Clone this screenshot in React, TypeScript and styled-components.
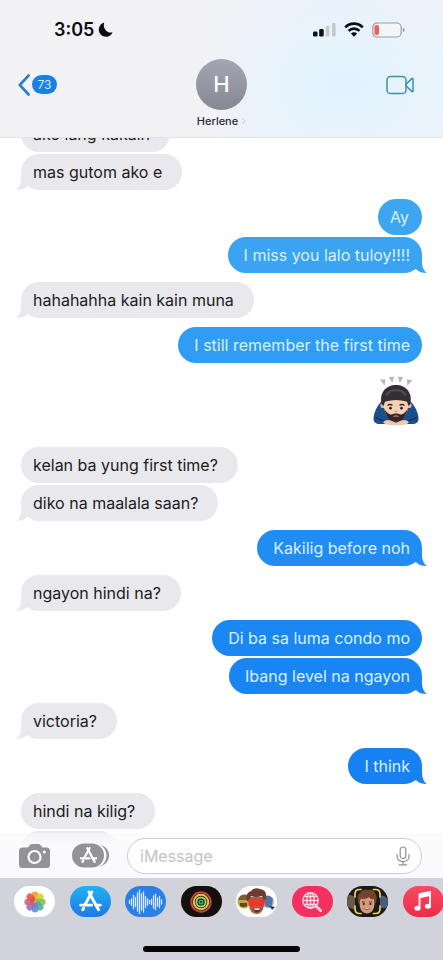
import React from "react";
import styled, { createGlobalStyle, css } from "styled-components";

const GlobalStyle = createGlobalStyle`
  *, *::before, *::after { box-sizing: border-box; }
  html, body { margin: 0; padding: 0; background: #fff; }
  body, button, input { font-family: Inter, "Liberation Sans", sans-serif; }
  button { border: 0; padding: 0; background: none; cursor: pointer; }
`;

const Phone = styled.div`
  display: flex;
  flex-direction: column;
  height: 100vh;
  overflow: hidden;
  background: #fff;
  color: #17171b;
`;

const Header = styled.header`
  flex: none;
  border-bottom: 1px solid #e2e3e6;
  background:
    radial-gradient(ellipse 150px 110px at 78% 62%, #e2f3fe 0%, #e6f3fdcc 45%, transparent 100%),
    linear-gradient(90deg, #f2f2f4 0%, #f2f2f5 45%, #eaf2fb 75%, #eef3f9 100%);
`;

const StatusBar = styled.div`
  display: flex;
  justify-content: space-between;
  align-items: center;
  height: 59px;
  padding: 0 38px 0 54px;
`;

const Clock = styled.div`
  display: flex;
  align-items: center;
  gap: 4px;
  font-size: 18px;
  line-height: 20px;
  font-weight: 600;
  color: #0c0c0e;
`;

const StatusIcons = styled.div`
  display: flex;
  align-items: center;
  gap: 8px;
`;

const NavBar = styled.nav`
  display: grid;
  grid-template-columns: 1fr auto 1fr;
  align-items: start;
  height: 78px;
  padding: 0 28px 0 18px;
`;

const BackButton = styled.button`
  display: flex;
  align-items: center;
  gap: 2px;
  justify-self: start;
  height: 51px;
`;

const UnreadCount = styled.span`
  display: block;
  width: 25px;
  border-radius: 10px;
  background: #1a80e4;
  color: #cfeaff;
  font-size: 12px;
  line-height: 19px;
  text-align: center;
`;

const Contact = styled.button`
  display: flex;
  flex-direction: column;
  align-items: center;
  gap: 4px;
  padding-left: 10px;
  color: #2b2b30;
`;

const Avatar = styled.span`
  display: block;
  width: 51px;
  height: 51px;
  border-radius: 50%;
  background: linear-gradient(#a3a6b3, #868793);
  color: #fff;
  font-size: 22px;
  font-weight: 500;
  line-height: 51px;
`;

const ContactName = styled.span`
  display: flex;
  align-items: center;
  gap: 4px;
  font-size: 11px;
  font-weight: 500;
  line-height: 14px;
`;

const VideoButton = styled.button`
  display: flex;
  align-items: center;
  justify-self: end;
  height: 51px;
`;

const Chat = styled.main`
  position: relative;
  flex: 1;
  min-height: 0;
  display: flex;
  flex-direction: column;
  overflow: hidden;
`;

const Thread = styled.div`
  flex: 1;
  min-height: 0;
  display: flex;
  flex-direction: column;
  justify-content: flex-end;
  gap: 9px;
  padding: 0 21px 11px;
`;

type Side = "in" | "out";

const Group = styled.div<{ $side: Side }>`
  flex: none;
  display: flex;
  flex-direction: column;
  align-items: ${(p) => (p.$side === "in" ? "flex-start" : "flex-end")};
  gap: 2px;
`;

const BubbleBox = styled.div<{ $side: Side; $color: string }>`
  position: relative;
  min-width: 44px;
  min-height: 36px;
  padding: ${(p) => (p.$side === "in" ? "8px 20px 8px 12px" : "8px 12px 8px 16px")};
  border-radius: 18px;
  background: ${(p) => p.$color};
  color: ${(p) => (p.$side === "in" ? "#1b1b20" : "#d9f1ff")};
  font-size: 16px;
  line-height: 20px;
  &:empty { width: 96px; }
`;

const ShortText = styled.span`
  margin-left: -4px;
`;

const Tail = styled.svg<{ $side: Side }>`
  position: absolute;
  bottom: 0;
  ${(p) =>
    p.$side === "in"
      ? css`
          left: -5px;
          transform: scaleX(-1);
        `
      : css`
          right: -5px;
        `}
`;

const Sticker = styled.div`
  display: flex;
  padding: 4px 3px 12px 0;
`;

const Composer = styled.form`
  position: absolute;
  left: 0;
  right: 0;
  bottom: 0;
  display: flex;
  align-items: center;
  gap: 21px;
  height: 45px;
  padding: 0 21px 0 19px;
  background: linear-gradient(#fafafc99, #fafafc 12px);
`;

const IconButton = styled.button`
  display: flex;
  flex: none;
`;

const Field = styled.label`
  flex: 1;
  min-width: 0;
  display: flex;
  align-items: center;
  height: 36px;
  margin-left: -3px;
  padding: 0 11px 0 12px;
  border: 1px solid #cdcdd1;
  border-radius: 18px;
  background: #fff;
`;

const TextInput = styled.input`
  flex: 1;
  min-width: 0;
  padding: 0;
  border: 0;
  outline: 0;
  background: transparent;
  color: #1b1b20;
  font-size: 16px;
  &::placeholder { color: #c3c3c7; opacity: 1; }
`;

const Drawer = styled.footer`
  flex: none;
  display: flex;
  flex-direction: column;
  justify-content: space-between;
  align-items: center;
  height: 82px;
  padding-bottom: 8px;
  background: #d2d3da;
`;

const AppStrip = styled.div`
  align-self: stretch;
  display: flex;
  justify-content: space-between;
  margin-right: -1px;
  padding: 8px 0 0 14px;
`;

const AppButton = styled.button<{ $bg: string }>`
  display: flex;
  flex: none;
  align-items: center;
  justify-content: center;
  width: 41px;
  height: 31px;
  border-radius: 16px;
  overflow: hidden;
  background: ${(p) => p.$bg};
`;

const HomeIndicator = styled.div`
  width: 157px;
  height: 6px;
  border-radius: 3px;
  background: #050505;
`;

const Moon = () => (
  <svg width="15" height="15" viewBox="0 0 15 15" aria-hidden="true">
    <path d="M6.200.6A7.200 7.200 0 1 0 14.600 10.400C10.200 11.500 4.300 7.500 6.200.6Z" fill="#0c0c0e" />
  </svg>
);

const Signal = () => (
  <svg width="23" height="15" viewBox="0 0 23 15" aria-hidden="true">
    <rect x="0" y="9.500" width="4.500" height="5" rx="1.200" fill="#111" />
    <rect x="6.200" y="7" width="4.500" height="7.500" rx="1.200" fill="#111" />
    <rect x="12.800" y="4" width="3.600" height="10.500" rx="1.200" fill="#c5c8cd" />
    <rect x="19" y="1" width="3.600" height="13.500" rx="1.200" fill="#c5c8cd" />
  </svg>
);

const Wifi = () => (
  <svg width="20" height="15" viewBox="0 0 20 15" aria-hidden="true">
    <g fill="none" stroke="#0c0c0e" strokeWidth="2.600">
      <path d="M1.200 5.400C6.200.4 13.800.4 18.800 5.400" />
      <path d="M4.500 8.900C7.600 5.900 12.400 5.900 15.500 8.900" />
    </g>
    <path d="M10 14.700L6.900 11.400C8.700 9.800 11.300 9.800 13.100 11.400Z" fill="#0c0c0e" />
  </svg>
);

const Battery = () => (
  <svg width="33" height="16" viewBox="0 0 33 16" aria-hidden="true">
    <rect x=".7" y="1" width="28.500" height="14" rx="4.500" fill="#f3f6f9" stroke="#9a9da1" strokeWidth="1.200" />
    <path d="M6 1H5.200A4.500 4.500 0 0 0 .7 5.500V10.500A4.500 4.500 0 0 0 5.200 15H6" fill="none" stroke="#dfa09b" strokeWidth="1.200" />
    <rect x="2.500" y="3" width="4.500" height="10" rx="2" fill="#e5645c" />
    <path d="M31 6V10C32.900 9.500 32.900 6.500 31 6Z" fill="#8b8e92" />
  </svg>
);

const BackChevron = () => (
  <svg width="12" height="22" viewBox="0 0 12 22" aria-hidden="true">
    <path d="M10.600 1.500L1.800 11L10.600 20.500" fill="none" stroke="#2f80c4" strokeWidth="2.600" strokeLinecap="round" strokeLinejoin="round" />
  </svg>
);

const VideoIcon = () => (
  <svg width="29" height="20" viewBox="0 0 29 20" aria-hidden="true">
    <g fill="none" stroke="#3f8fb0" strokeWidth="1.500" strokeLinejoin="round">
      <rect x="1" y="1.500" width="19" height="17" rx="3.600" />
      <path d="M20.300 9L25.800 3.600Q27 2.800 27 4.500V15.500Q27 17.200 25.800 16.400L20.300 11Z" />
    </g>
  </svg>
);

const BowingPerson = () => (
  <svg width="46" height="50" viewBox="0 0 46 50" role="img" aria-label="Person bowing">
    <g fill="#b5b5ba">
      <path d="M7 3.500L12.500 3.500L11.500 9.500Z" />
      <path d="M15.800 1L21 .8L19.300 7Z" />
      <path d="M25 .8L30.200 1L26.800 7Z" />
      <path d="M34 3.200L39.500 4.500L34.300 9.500Z" />
    </g>
    <path d="M10 24C4 29 .5 37 .5 43Q.5 47 5 48H41Q45.500 47 45.500 43C45.500 37 42 29 36 24Z" fill="#1b4f8c" />
    <path d="M2.500 41Q7 45 14 45M43.500 41Q39 45 32 45" fill="none" stroke="#0d2f5c" strokeWidth="1.300" />
    <path d="M10 46Q14 42 22 46.500H24Q32 42 36 46Q34 49.500 23.500 49.200H22.500Q12 49.500 10 46Z" fill="#f2c7ab" />
    <circle cx="10" cy="29.500" r="2.600" fill="#e8b492" />
    <circle cx="36" cy="29.500" r="2.600" fill="#e8b492" />
    <path d="M11 24Q10 36 15 41Q23 48 31 41Q36 36 35 24Z" fill="#f6d0b5" />
    <path d="M11.500 33C12.500 39 16 45.500 23 45.500C30 45.500 33.500 39 34.500 33C32 37 30 38.500 27 38.500C25 37.300 21 37.300 19 38.500C16 38.500 14 37 11.500 33Z" fill="#33262a" />
    <path d="M20.500 40.500Q23 39.300 25.500 40.500" stroke="#c9806b" strokeWidth="1.200" fill="none" />
    <path d="M9 29C5.500 17 13 9 23 9C33 9 40.500 17 37 29L35 29.500C35 27.500 34.500 26.500 33.500 25.500Q23 22.500 12.500 25.500C11.500 26.500 11 27.500 11 29.500Z" fill="#332e33" />
    <path d="M13.500 19C17.500 12.500 28.500 12.500 32.500 19" stroke="#4f494f" strokeWidth="2.400" fill="none" strokeLinecap="round" />
    <path d="M14.500 29.500Q17 27.800 19.500 29.300M26.500 29.300Q29 27.800 31.500 29.500" stroke="#3d2a26" strokeWidth="1.500" fill="none" />
    <circle cx="17.500" cy="32.200" r="1.400" fill="#362620" />
    <circle cx="28.500" cy="32.200" r="1.400" fill="#362620" />
    <path d="M21.800 35.300Q23 36.300 24.200 35.300" stroke="#c98b6e" strokeWidth="1" fill="none" />
  </svg>
);

const CameraIcon = () => (
  <svg width="32" height="26" viewBox="0 0 32 26" aria-hidden="true">
    <path d="M3.500 4.500H8Q9.200 4.500 10 3.200L11 1.800Q11.600 1 13 1H19.500Q20.700 1 21.300 1.800L22.400 3.200Q23.200 4.500 24.400 4.500H27.500Q31 4.500 31 8V21.500Q31 25 27.500 25H3.500Q0 25 0 21.500V8Q0 4.500 3.500 4.500Z" fill="#929297" />
    <circle cx="15.500" cy="14" r="6" fill="none" stroke="#fff" strokeWidth="2.200" />
    <circle cx="25.300" cy="9" r="1.500" fill="#fff" />
  </svg>
);

const AppStoreMark = () => (
  <g fill="none" stroke="#fff" strokeLinecap="round" strokeWidth="2.600">
    <path d="M10.600 2.600L17.400 15.200L19.200 18.400" />
    <path d="M13.200 2.600L7.200 13.600" />
    <path d="M3.200 14.200H13M17 14.200H20.800" />
    <path d="M5.900 17L5.100 18.400" />
  </g>
);

const AppsIcon = () => (
  <svg width="37" height="25" viewBox="0 0 37 25" aria-hidden="true">
    <path d="M25 1C33 2 37 7 37 12.500S33 23 25 24Z" fill="#929297" />
    <rect x="0" y="0" width="34.500" height="25" rx="12.500" fill="#fafafc" />
    <rect x="0" y=".5" width="32" height="24" rx="12" fill="#929297" />
    <svg x="6" y="3" width="21" height="19" viewBox="0 0 24 22"><AppStoreMark /></svg>
  </svg>
);

const MicIcon = () => (
  <svg width="14" height="20" viewBox="0 0 14 20" aria-hidden="true">
    <g fill="none" stroke="#8f8f95" strokeWidth="1.200" strokeLinecap="round">
      <rect x="4.200" y="1" width="5.600" height="11.500" rx="2.800" />
      <path d="M1 8.500V10.500C1 17.300 13 17.300 13 10.500V8.500M7 15.700V18.800M3.200 18.800H10.800" />
    </g>
  </svg>
);

const petals = ["#f49a2c", "#d3cf35", "#86c04b", "#4fb08e", "#5b8fd0", "#8e70bd", "#cf6387", "#e4523f"];

const PhotosIcon = () => (
  <svg width="24" height="24" viewBox="-12 -12 24 24" aria-hidden="true">
    {petals.map((color, i) => (
      <rect key={color} x="-3.300" y="-10.600" width="6.600" height="10" rx="3.300" fill={color} opacity=".9" transform={`rotate(${i * 45})`} />
    ))}
  </svg>
);

const StoreIcon = () => (
  <svg width="27" height="25" viewBox="0 0 24 22" aria-hidden="true"><AppStoreMark /></svg>
);

const levels = [3, 6, 13, 9, 18, 23, 16, 20, 11, 6, 3, 5, 12, 15, 8, 11, 4];

const WaveIcon = () => (
  <svg width="37" height="26" viewBox="0 0 37 26" aria-hidden="true">
    {levels.map((h, i) => (
      <path key={i} d={`M${2.500 + i * 2} ${13 - h / 2}V${13 + h / 2}`} stroke="#d5f0ff" strokeWidth="1.300" strokeLinecap="round" />
    ))}
  </svg>
);

const RingsIcon = () => (
  <svg width="24" height="24" viewBox="-12 -12 24 24" aria-hidden="true">
    <g fill="none" strokeWidth="2">
      <circle r="9.700" stroke="#c5463f" />
      <circle r="7.200" stroke="#e0c84f" />
      <circle r="4.600" stroke="#9fd35c" />
    </g>
    <circle r="2.600" fill="#3cae7c" />
    <circle r="1" fill="#12302a" />
  </svg>
);

const MemojiIcon = () => (
  <svg width="41" height="31" viewBox="0 0 41 31" aria-hidden="true">
    <circle cx="8" cy="16" r="6.500" fill="#c9a23a" />
    <path d="M2 14Q4 7 12 9L11 14Z" fill="#75612f" />
    <path d="M4 17H11V20Q7 22 4 20Z" fill="#5d4b2f" />
    <circle cx="32" cy="16" r="6" fill="#9bb4d3" />
    <path d="M28 11Q33 7 37 13L35 22L29 20Z" fill="#56749d" />
    <path d="M34 20L39 21L36 24Z" fill="#26324b" />
    <path d="M13 11H28V19Q27 28 20.500 28Q14 28 13 19Z" fill="#a95f46" />
    <path d="M11 15Q9 7 15 5Q18 1 24 3Q31 4 30 11L28.500 16L26 10Q20 12 15 10L13 15Z" fill="#6d3b2e" />
    <path d="M12 13.500H20L21 15L22 13.500H29L28 20Q25 22 22 19.500H19Q15 22 13 19.500Z" fill="#f0342c" />
    <path d="M17 22.500H25Q23 27 20.800 26.500Q18 26 17 22.500Z" fill="#7c1e20" />
    <path d="M18 22.500H24L23 24H19Z" fill="#fff" />
  </svg>
);

const SearchGlobeIcon = () => (
  <svg width="22" height="22" viewBox="0 0 22 22" aria-hidden="true">
    <g fill="none" stroke="#ffd5e2" strokeWidth="1.400">
      <circle cx="9.500" cy="9.500" r="7.700" />
      <ellipse cx="9.500" cy="9.500" rx="3.600" ry="7.700" />
      <path d="M9.500 1.800V17.200M1.800 9.500H17.200M3 5.500H16M3 13.500H16" />
    </g>
    <path d="M15.200 15.200L19.800 19.800" stroke="#ffd5e2" strokeWidth="2.800" strokeLinecap="round" />
  </svg>
);

const FaceFrameIcon = () => (
  <svg width="41" height="31" viewBox="0 0 41 31" aria-hidden="true">
    <path d="M0 10Q5 7 8 12V23Q4 24 0 20Z" fill="#6c5a44" />
    <path d="M33 10Q37 8 41 13V20Q37 24 33 21Z" fill="#4a5d7b" />
    <path d="M12.500 11H27.500V18Q27 27 20 27.500Q13 27 12.500 18Z" fill="#d69a7c" />
    <path d="M11.500 18Q9 9 13 7Q16 2.500 21 4Q27 3 28.500 8Q31 11 28.500 18L27 13Q24 14 22 11Q18 14 14 12.500Z" fill="#74432d" />
    <path d="M15 16H18M22 16H25" stroke="#5a3222" strokeWidth="1.200" />
    <circle cx="16.800" cy="18" r="1.100" fill="#30231f" />
    <circle cx="23.400" cy="18" r="1.100" fill="#30231f" />
    <path d="M17 22.500Q20 25 23 22.500" fill="#fff" stroke="#8c4639" strokeWidth="1" />
    <path d="M8 11V8Q8 3.500 12.500 3.500H14M26.500 3.500H28.500Q33 3.500 33 8V11M33 20V23Q33 27.500 28.500 27.500H26.500M14 27.500H12.500Q8 27.500 8 23V20" fill="none" stroke="#e5d36a" strokeWidth="1.700" strokeLinecap="round" />
  </svg>
);

const MusicIcon = () => (
  <svg width="20" height="23" viewBox="0 0 20 23" aria-hidden="true">
    <path d="M6.500 17.500V4.300L17 2V15.500" fill="none" stroke="#fff" strokeWidth="1.900" strokeLinejoin="round" />
    <path d="M6.500 4L17 1.800V6L6.500 8.200Z" fill="#fff" />
    <ellipse cx="4.500" cy="18.300" rx="3.100" ry="2.500" fill="#fff" />
    <ellipse cx="15" cy="16.300" rx="3.100" ry="2.500" fill="#fff" />
  </svg>
);

const GREY = "#e9e9ed";

type Message = { text?: string; color?: string };
type MessageGroup = { side: Side; tail?: boolean; sticker?: boolean; items: Message[] };

const conversation: MessageGroup[] = [
  { side: "in", tail: true, items: [{ text: "ako lang kakain" }, { text: "mas gutom ako e" }] },
  { side: "out", tail: true, items: [{ text: "Ay", color: "#3ea6f1" }, { text: "I miss you lalo tuloy!!!!", color: "#3aa3f2" }] },
  { side: "in", tail: true, items: [{ text: "hahahahha kain kain muna" }] },
  { side: "out", items: [{ text: "I still remember the first time", color: "#309cf4" }] },
  { side: "out", sticker: true, items: [] },
  { side: "in", tail: true, items: [{ text: "kelan ba yung first time?" }, { text: "diko na maalala saan?" }] },
  { side: "out", tail: true, items: [{ text: "Kakilig before noh", color: "#218df2" }] },
  { side: "in", tail: true, items: [{ text: "ngayon hindi na?" }] },
  { side: "out", tail: true, items: [{ text: "Di ba sa luma condo mo", color: "#1b87f2" }, { text: "Ibang level na ngayon", color: "#1985f2" }] },
  { side: "in", tail: true, items: [{ text: "victoria?" }] },
  { side: "out", tail: true, items: [{ text: "I think", color: "#1781f3" }] },
  { side: "in", items: [{ text: "hindi na kilig?" }, {}] },
];

const apps = [
  { name: "Photos", bg: "#fff", icon: <PhotosIcon /> },
  { name: "App Store", bg: "linear-gradient(#23b0f3, #1c79e4)", icon: <StoreIcon /> },
  { name: "Audio", bg: "#2b80e6", icon: <WaveIcon /> },
  { name: "Fitness", bg: "#15100f", icon: <RingsIcon /> },
  { name: "Memoji", bg: "#fff", icon: <MemojiIcon /> },
  { name: "Images", bg: "#f5305f", icon: <SearchGlobeIcon /> },
  { name: "Stickers", bg: "#1d1915", icon: <FaceFrameIcon /> },
  { name: "Music", bg: "linear-gradient(#f94a60, #ee2c4b)", icon: <MusicIcon /> },
];

function Bubble({ side, text, color = GREY, tail }: Message & { side: Side; tail?: boolean }) {
  const isShort = side === "out" && text !== undefined && text.length < 3;
  return (
    <BubbleBox $side={side} $color={color}>
      {tail && (
        <Tail $side={side} width="17" height="18" viewBox="0 0 17 18" aria-hidden="true">
          <path d="M12 0V6C12 12 14 16 17 18C12 18 9 17 6 14L0 16V0Z" fill={color} />
        </Tail>
      )}
      {isShort ? <ShortText>{text}</ShortText> : text}
    </BubbleBox>
  );
}

export default function App() {
  return (
    <Phone>
      <GlobalStyle />
      <Header>
        <StatusBar>
          <Clock>3:05<Moon /></Clock>
          <StatusIcons><Signal /><Wifi /><Battery /></StatusIcons>
        </StatusBar>
        <NavBar>
          <BackButton type="button" aria-label="Back, 73 unread">
            <BackChevron />
            <UnreadCount>73</UnreadCount>
          </BackButton>
          <Contact type="button">
            <Avatar>H</Avatar>
            <ContactName>
              Herlene
              <svg width="4" height="8" viewBox="0 0 4 8" aria-hidden="true">
                <path d="M.5 1L3 4L.5 7" fill="none" stroke="#c4c6cb" />
              </svg>
            </ContactName>
          </Contact>
          <VideoButton type="button" aria-label="Video call"><VideoIcon /></VideoButton>
        </NavBar>
      </Header>
      <Chat>
        <Thread>
          {conversation.map((group, g) => (
            <Group key={g} $side={group.side}>
              {group.sticker && <Sticker><BowingPerson /></Sticker>}
              {group.items.map((m, i) => (
                <Bubble key={i} {...m} side={group.side} tail={group.tail && i === group.items.length - 1} />
              ))}
            </Group>
          ))}
        </Thread>
        <Composer onSubmit={(e) => e.preventDefault()}>
          <IconButton type="button" aria-label="Camera"><CameraIcon /></IconButton>
          <IconButton type="button" aria-label="Apps"><AppsIcon /></IconButton>
          <Field>
            <TextInput type="text" placeholder="iMessage" aria-label="iMessage" />
            <IconButton type="button" aria-label="Dictate"><MicIcon /></IconButton>
          </Field>
        </Composer>
      </Chat>
      <Drawer>
        <AppStrip>
          {apps.map((app) => (
            <AppButton key={app.name} type="button" aria-label={app.name} $bg={app.bg}>{app.icon}</AppButton>
          ))}
        </AppStrip>
        <HomeIndicator />
      </Drawer>
    </Phone>
  );
}
